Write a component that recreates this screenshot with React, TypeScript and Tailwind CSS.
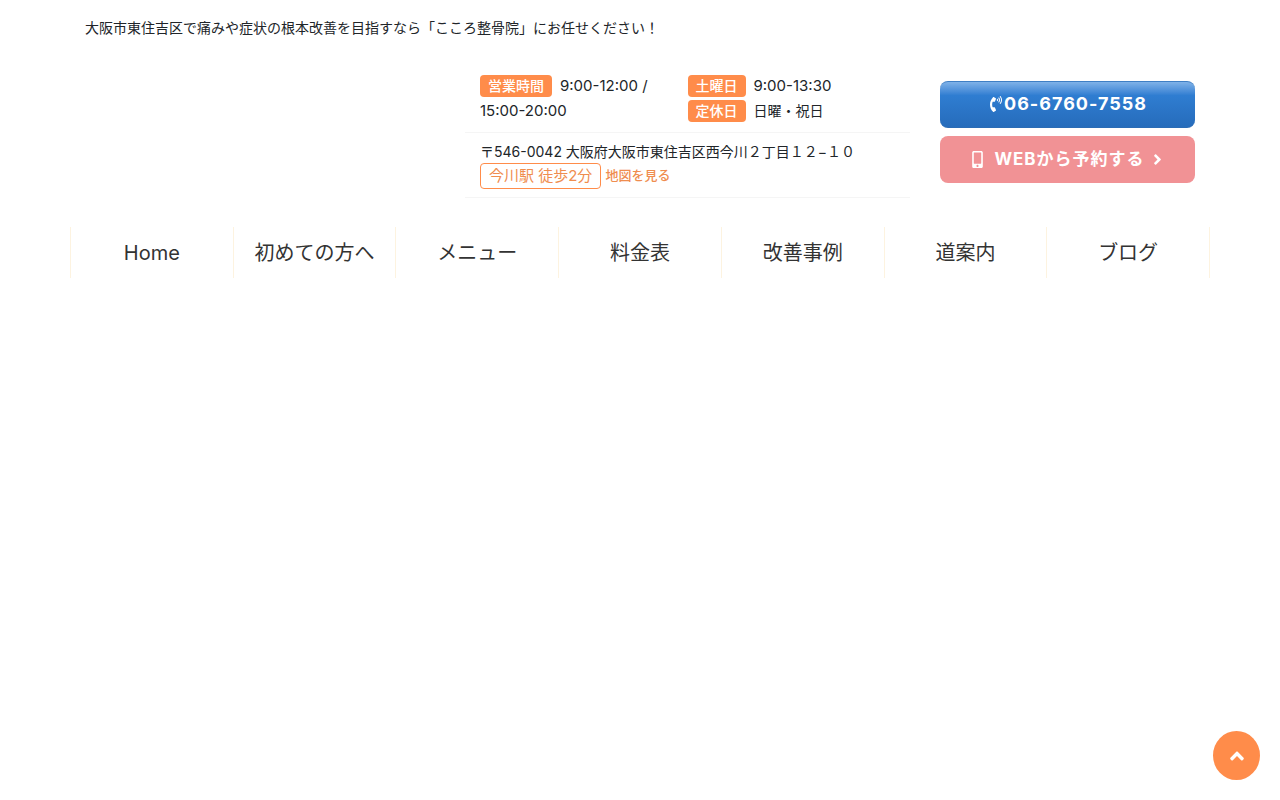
import { FaAngleRight, FaAngleUp, FaMobileAlt, FaPhoneVolume } from 'react-icons/fa'

const navItems = ['Home', '初めての方へ', 'メニュー', '料金表', '改善事例', '道案内', 'ブログ']

function Label({ children }: { children: string }) {
  return (
    <span className="mr-2 inline-block rounded-sm bg-[#ff8c4a] px-2 text-sm leading-[22px] font-medium text-white">
      {children}
    </span>
  )
}

export default function App() {
  return (
    <div className="min-h-screen bg-white font-[Inter,'Noto_Sans_CJK_JP',sans-serif] text-[#212529]">
      <div className="mx-auto max-w-[1140px]">
        <header>
          <h1 className="px-[15px] pt-4 text-sm leading-6">
            大阪市東住吉区で痛みや症状の根本改善を目指すなら「こころ整骨院」にお任せください！
          </h1>
          <div className="grid grid-cols-12 pt-[33px]">
            <div className="col-span-5 col-start-5 px-[15px]">
              <div className="grid grid-cols-2 border-b border-[#f5f5f5] pb-[9px] text-sm leading-[25px]">
                <div className="px-[15px]">
                  <p>
                    <Label>営業時間</Label>
                    <span className="text-[15px] leading-none">9:00-12:00 /</span>
                  </p>
                  <p className="text-[15px] leading-[25px]">15:00-20:00</p>
                </div>
                <div>
                  <p>
                    <Label>土曜日</Label>
                    <span className="text-[15px] leading-none">9:00-13:30</span>
                  </p>
                  <p>
                    <Label>定休日</Label>日曜・祝日
                  </p>
                </div>
              </div>
              <div className="border-b border-[#f5f5f5] px-[15px] py-2">
                <p className="text-sm leading-[22px]">〒546-0042 大阪府大阪市東住吉区西今川２丁目１２−１０</p>
                <p className="flex items-center gap-1 text-[#ef8d4f]">
                  <span className="rounded-sm border border-[#ff8c4a] px-2 text-[15px] leading-6">
                    今川駅 徒歩2分
                  </span>
                  <a href="#map" className="text-[13px] font-medium">地図を見る</a>
                </p>
              </div>
            </div>
            <div className="col-span-3 flex flex-col gap-2 px-[15px] pt-2 font-bold tracking-[1px] text-white">
              <a
                href="tel:06-6760-7558"
                className="flex h-[47px] items-center justify-center rounded-lg border-y border-t-[#3f7fc4] border-b-[#2b6cb5] bg-linear-to-b from-[#7fb2e8] via-[#2f7dd1] via-30% to-[#266cbb] pb-0.5 text-lg"
              >
                <FaPhoneVolume size={16} />
                06-6760-7558
              </a>
              <a
                href="#reserve"
                className="flex h-[47px] items-center justify-center gap-1 rounded-lg bg-[#f19295] text-[17px]"
              >
                <FaMobileAlt size={17} />
                <span className="pl-1">WEBから予約する</span>
                <FaAngleRight size={17} />
              </a>
            </div>
          </div>
        </header>
        <nav className="pt-[29px]">
          <ul className="grid grid-cols-7 border-l border-[#fdf3e0]">
            {navItems.map((item) => (
              <li key={item} className="border-r border-[#fdf3e0]">
                <a href="#" className="block pt-[11px] pb-2.5 text-center text-xl leading-[30px] text-[#333]">
                  {item}
                </a>
              </li>
            ))}
          </ul>
        </nav>
      </div>
      <button
        type="button"
        aria-label="ページの先頭へ"
        className="fixed right-5 bottom-5 flex h-[49px] w-[47px] items-center justify-center rounded-[50%] bg-[#ff8c4a] text-white"
      >
        <FaAngleUp size={22} />
      </button>
    </div>
  )
}
